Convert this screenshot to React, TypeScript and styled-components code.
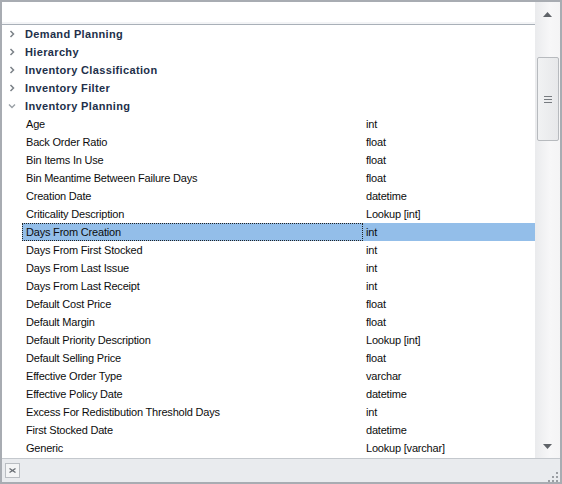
import React from "react";
import styled, { createGlobalStyle } from "styled-components";

const Global = createGlobalStyle`
  html, body { margin: 0; padding: 0; background: #fff; }
  body { font-family: "Liberation Sans", Arial, sans-serif; }
`;

const Frame = styled.div`
  width: 562px;
  height: 484px;
  box-sizing: border-box;
  border: 2px solid #a8acb2;
  display: flex;
  flex-direction: column;
  background: #fff;
`;

const Body = styled.div`
  flex: 1;
  display: flex;
  min-height: 0;
`;

const Content = styled.div`
  flex: 1;
  display: flex;
  flex-direction: column;
  min-width: 0;
`;

const SearchBar = styled.div`
  height: 20px;
  background: #fff;
  border-bottom: 2px solid #f3f4f6;
  box-shadow: 0 1px 0 #a9b0b8;
  margin-bottom: 1px;
`;

const List = styled.div`
  flex: 1;
  overflow: hidden;
`;

const GroupRow = styled.div`
  height: 18px;
  display: flex;
  align-items: center;
  font-weight: bold;
  font-size: 11px;
  letter-spacing: 0.35px;
  color: #22304a;
`;

const Arrow = styled.span`
  width: 23px;
  display: flex;
  align-items: center;
  justify-content: center;
  padding-right: 4px;
  box-sizing: border-box;
`;

const Row = styled.div<{ $selected?: boolean }>`
  height: 18px;
  display: grid;
  grid-template-columns: 341px 1fr;
  margin-left: 20px;
  background: ${(p) => (p.$selected ? "#93bee9" : "transparent")};
  font-size: 11px;
  letter-spacing: -0.2px;
  color: #0d0d0d;
`;

const Cell = styled.div<{ $focus?: boolean }>`
  display: flex;
  align-items: center;
  padding-left: ${(p) => (p.$focus ? "3px" : "4px")};
  white-space: nowrap;
  overflow: hidden;
  box-sizing: border-box;
  border: ${(p) => (p.$focus ? "1px dotted #222" : "none")};
`;

const ValueCell = styled(Cell)`
  padding-left: 3px;
`;

const Scrollbar = styled.div`
  width: 25px;
  display: flex;
  flex-direction: column;
  align-items: center;
  background: linear-gradient(to right, #eaebed, #f7f7f8 60%, #f4f4f5);
`;

const ArrowBtn = styled.div`
  height: 24px;
  width: 100%;
  display: flex;
  align-items: center;
  justify-content: center;
`;

const Track = styled.div`
  flex: 1;
  width: 100%;
  display: flex;
  flex-direction: column;
  align-items: center;
`;

const Thumb = styled.div`
  margin-top: 31px;
  width: 22px;
  height: 84px;
  box-sizing: border-box;
  border: 1px solid #b7babe;
  border-radius: 2px;
  background: linear-gradient(to right, #f1f2f3, #e7e8ea);
  display: flex;
  align-items: center;
  justify-content: center;
`;

const Grip = styled.div`
  width: 8px;
  height: 7px;
  display: flex;
  flex-direction: column;
  justify-content: space-between;
  span {
    display: block;
    height: 1px;
    background: #777b80;
  }
`;

const StatusBar = styled.div`
  height: 24px;
  box-sizing: border-box;
  border-top: 1px solid #c4c8cd;
  background: #e9ebee;
  display: flex;
  align-items: center;
  justify-content: space-between;
  padding: 0 0 0 3px;
`;

const CloseBtn = styled.div`
  width: 15px;
  height: 15px;
  box-sizing: border-box;
  border: 1px solid #b9bdc2;
  background: #f4f5f6;
  display: flex;
  align-items: center;
  justify-content: center;
`;

const ResizeGrip = styled.div`
  align-self: flex-end;
  width: 12px;
  height: 12px;
`;

const Chevron = ({ open }: { open?: boolean }) =>
  open ? (
    <svg width="8" height="6" viewBox="0 0 8 6">
      <path d="M1 1.5 L4 4.5 L7 1.5" fill="none" stroke="#9aa0a6" strokeWidth="1.4" />
    </svg>
  ) : (
    <svg width="6" height="8" viewBox="0 0 6 8">
      <path d="M1.5 1 L4.5 4 L1.5 7" fill="none" stroke="#7c8288" strokeWidth="1.5" />
    </svg>
  );

const groups = ["Demand Planning", "Hierarchy", "Inventory Classification", "Inventory Filter"];

const fields: [string, string][] = [
  ["Age", "int"],
  ["Back Order Ratio", "float"],
  ["Bin Items In Use", "float"],
  ["Bin Meantime Between Failure Days", "float"],
  ["Creation Date", "datetime"],
  ["Criticality Description", "Lookup [int]"],
  ["Days From Creation", "int"],
  ["Days From First Stocked", "int"],
  ["Days From Last Issue", "int"],
  ["Days From Last Receipt", "int"],
  ["Default Cost Price", "float"],
  ["Default Margin", "float"],
  ["Default Priority Description", "Lookup [int]"],
  ["Default Selling Price", "float"],
  ["Effective Order Type", "varchar"],
  ["Effective Policy Date", "datetime"],
  ["Excess For Redistibution Threshold Days", "int"],
  ["First Stocked Date", "datetime"],
  ["Generic", "Lookup [varchar]"],
];

export default function App() {
  return (
    <>
      <Global />
      <Frame>
        <Body>
          <Content>
            <SearchBar />
            <List>
              {groups.map((g) => (
                <GroupRow key={g}>
                  <Arrow>
                    <Chevron />
                  </Arrow>
                  {g}
                </GroupRow>
              ))}
              <GroupRow>
                <Arrow>
                  <Chevron open />
                </Arrow>
                Inventory Planning
              </GroupRow>
              {fields.map(([name, type]) => {
                const sel = name === "Days From Creation";
                return (
                  <Row key={name} $selected={sel}>
                    <Cell $focus={sel}>{name}</Cell>
                    <ValueCell>{type}</ValueCell>
                  </Row>
                );
              })}
            </List>
          </Content>
          <Scrollbar>
            <ArrowBtn>
              <svg width="9" height="5" viewBox="0 0 9 5">
                <path d="M4.5 0 L9 5 L0 5 Z" fill="#5f6368" />
              </svg>
            </ArrowBtn>
            <Track>
              <Thumb>
                <Grip>
                  <span />
                  <span />
                  <span />
                </Grip>
              </Thumb>
            </Track>
            <ArrowBtn>
              <svg width="9" height="5" viewBox="0 0 9 5">
                <path d="M0 0 L9 0 L4.5 5 Z" fill="#5f6368" />
              </svg>
            </ArrowBtn>
          </Scrollbar>
        </Body>
        <StatusBar>
          <CloseBtn>
            <svg width="7" height="5" viewBox="0 0 7 5">
              <path d="M0.5 0.5 L6.5 4.5 M6.5 0.5 L0.5 4.5" stroke="#6b7076" strokeWidth="1.3" />
            </svg>
          </CloseBtn>
          <ResizeGrip>
            <svg width="12" height="12" viewBox="0 0 12 12">
              <rect x="8" y="0" width="2" height="2" fill="#9a9ea3" />
              <rect x="4" y="4" width="2" height="2" fill="#9a9ea3" />
              <rect x="8" y="4" width="2" height="2" fill="#9a9ea3" />
              <rect x="0" y="8" width="2" height="2" fill="#9a9ea3" />
              <rect x="4" y="8" width="2" height="2" fill="#9a9ea3" />
              <rect x="8" y="8" width="2" height="2" fill="#9a9ea3" />
            </svg>
          </ResizeGrip>
        </StatusBar>
      </Frame>
    </>
  );
}
